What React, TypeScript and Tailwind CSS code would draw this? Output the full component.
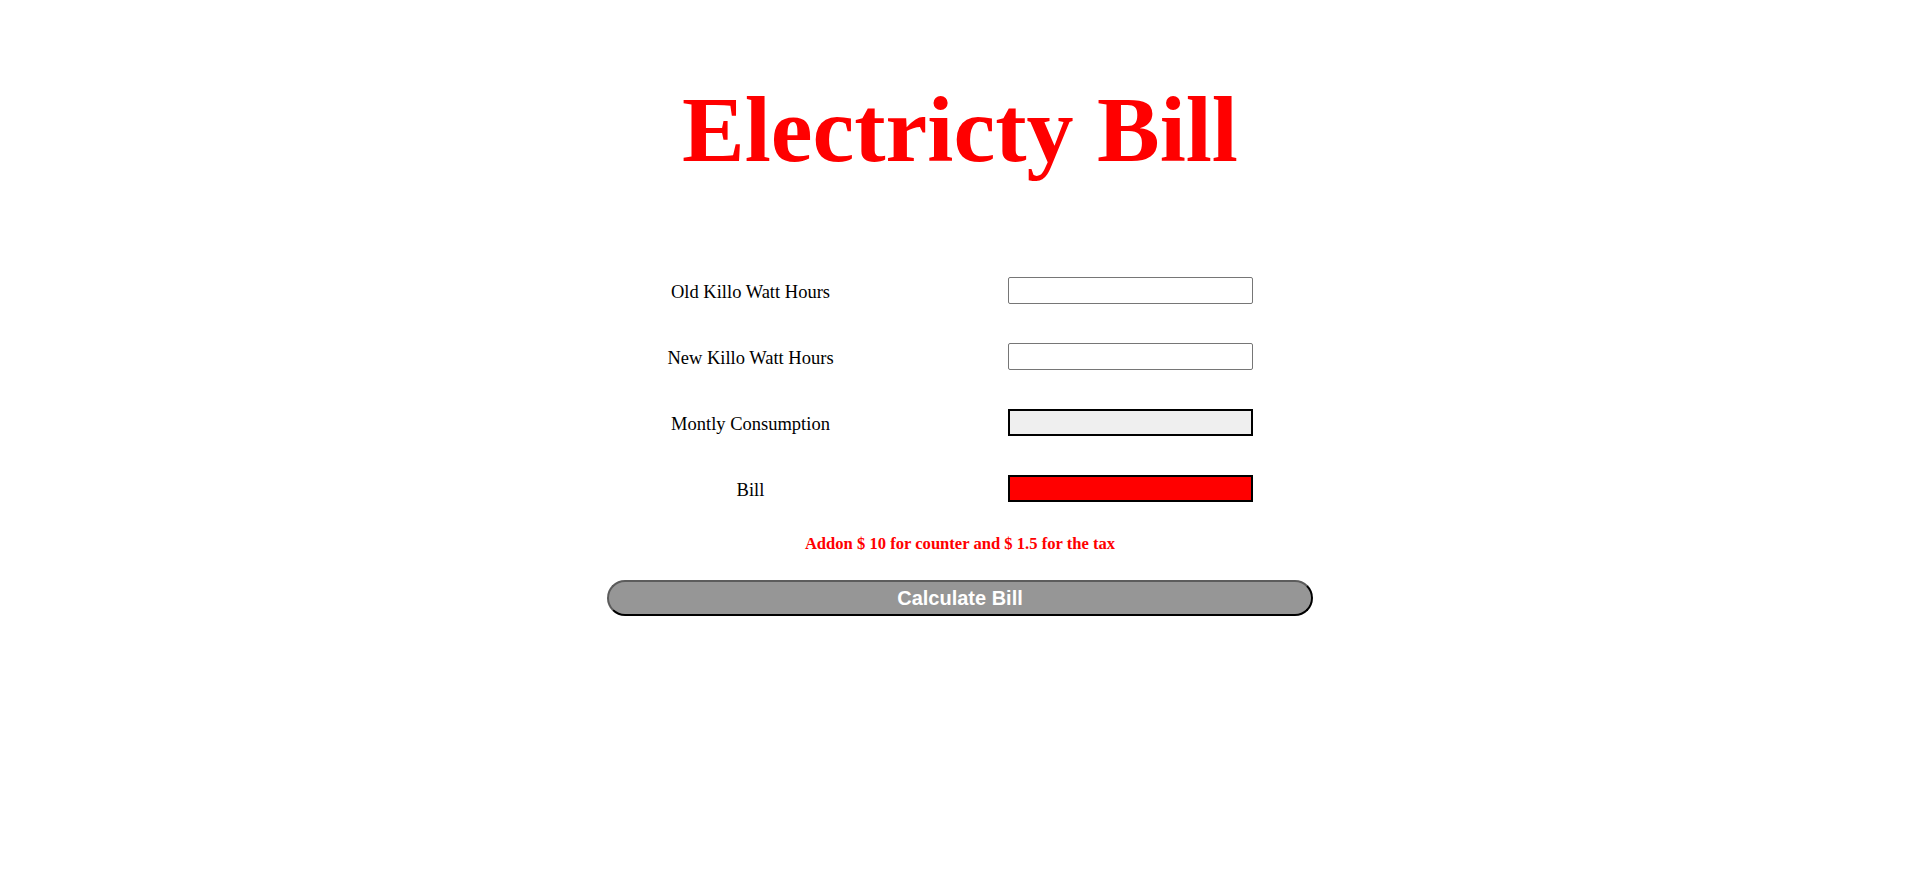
import React from "react";

const serif = "font-['Liberation_Serif','Times_New_Roman',serif]";

function Row({ label, children }: { label: string; children: React.ReactNode }) {
  return (
    <div className="flex h-[27px] items-start">
      <div className={`w-[287px] shrink-0 text-center text-[18.5px] leading-[31px] text-black ${serif}`}>
        {label}
      </div>
      <div className="ml-[114px]">{children}</div>
    </div>
  );
}

export default function App() {
  return (
    <div className="min-h-[883px] w-full bg-white">
      <h1
        className={`pt-[83px] text-center text-[94px] font-bold leading-[92px] text-[#ff0000] ${serif}`}
      >
        Electricty Bill
      </h1>

      <div className="mx-auto mt-[102px] flex w-[706px] flex-col gap-[39px]">
        <Row label="Old Killo Watt Hours">
          <input
            type="text"
            className="block h-[27px] w-[245px] rounded-[2px] border border-[#767676] bg-white px-[2px] outline-none"
          />
        </Row>
        <Row label="New Killo Watt Hours">
          <input
            type="text"
            className="block h-[27px] w-[245px] rounded-[2px] border border-[#767676] bg-white px-[2px] outline-none"
          />
        </Row>
        <Row label="Montly Consumption">
          <input
            type="text"
            disabled
            className="block h-[27px] w-[245px] border-2 border-black bg-[#efefef] px-[2px] outline-none"
          />
        </Row>
        <Row label="Bill">
          <input
            type="text"
            disabled
            className="block h-[27px] w-[245px] border-2 border-black bg-[#ff0000] px-[2px] outline-none"
          />
        </Row>
      </div>

      <p
        className={`mt-[32px] text-center text-[16.6px] font-bold leading-[19px] text-[#ff0000] ${serif}`}
      >
        Addon $ 10 for counter and $ 1.5 for the tax
      </p>

      <div className="mt-[27px] flex justify-center">
        <button
          type="button"
          className="h-[36px] w-[706px] rounded-full border-2 border-t-[#5c5c5c] border-l-[#5c5c5c] border-r-black border-b-black bg-[#969696] font-['Liberation_Sans',Arial,sans-serif] text-[20px] font-bold leading-none text-white"
        >
          Calculate Bill
        </button>
      </div>
    </div>
  );
}
